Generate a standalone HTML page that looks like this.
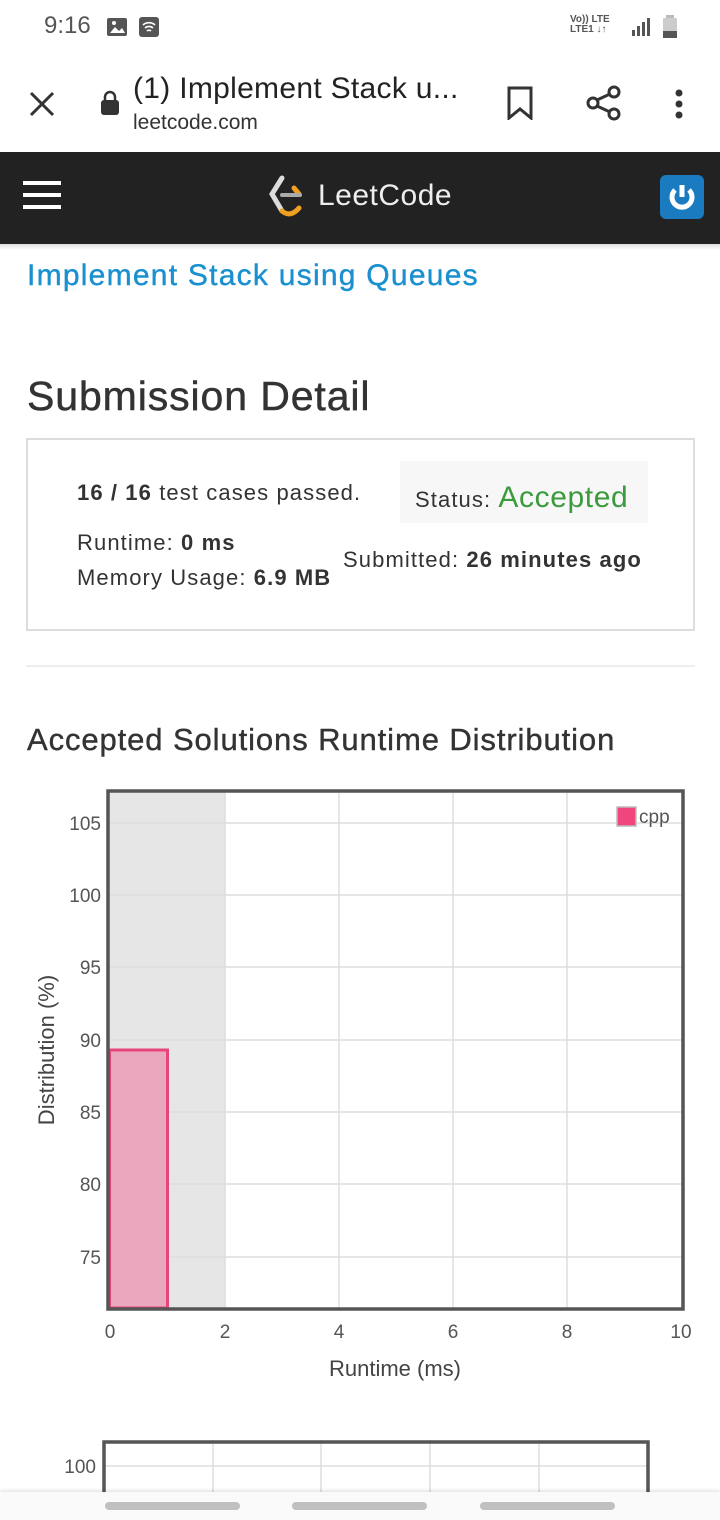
<!DOCTYPE html>
<html><head><meta charset="utf-8"><style>
*{margin:0;padding:0;box-sizing:border-box}
body{width:720px;height:1520px;overflow:hidden;background:#fff;font-family:"Liberation Sans",sans-serif;position:relative;color:#333}
.a{position:absolute}
.t{font-size:22px;letter-spacing:1.1px}
</style></head><body>
<!-- status bar -->
<div class="a" style="left:44px;top:12px;font-size:24px;color:#555">9:16</div>
<svg class="a" style="left:106px;top:16px" width="22" height="22"><rect x="1" y="2" width="20" height="18" fill="#555" rx="2"/><path d="M4 17l5-6 4 4 3-3 3 5z" fill="#fff"/><circle cx="8" cy="7" r="2" fill="#fff"/></svg>
<svg class="a" style="left:138px;top:16px" width="22" height="22"><rect x="1" y="1" width="20" height="20" rx="3" fill="#555"/><path d="M5 9a9 9 0 0 1 12 0M7 12a6 6 0 0 1 8 0M9 15a3 3 0 0 1 4 0" stroke="#fff" stroke-width="1.6" fill="none"/></svg>
<div class="a" style="left:570px;top:15px;font-size:10px;line-height:10px;color:#555;font-weight:bold">Vo)) LTE<br>LTE1 ↓↑</div>
<svg class="a" style="left:630px;top:16px" width="22" height="22"><rect x="2" y="14" width="3" height="6" fill="#555"/><rect x="7" y="10" width="3" height="10" fill="#555"/><rect x="12" y="6" width="3" height="14" fill="#555"/><rect x="17" y="2" width="3" height="18" fill="#555"/></svg>
<svg class="a" style="left:662px;top:14px" width="18" height="26"><rect x="4" y="1" width="8" height="3" fill="#bbb"/><rect x="1" y="4" width="14" height="20" fill="#ccc" rx="1"/><rect x="1" y="17" width="14" height="7" fill="#555"/></svg>
<!-- browser bar -->
<svg class="a" style="left:28px;top:90px" width="28" height="28"><path d="M3 3L25 25M25 3L3 25" stroke="#333" stroke-width="3"/></svg>
<svg class="a" style="left:100px;top:90px" width="20" height="26"><path d="M5 11V7a5 5 0 0 1 10 0v4" stroke="#333" stroke-width="2.5" fill="none"/><rect x="1" y="10" width="18" height="15" rx="3" fill="#333"/></svg>
<div class="a" style="left:133px;top:72px;font-size:30px;color:#222;letter-spacing:0.3px">(1) Implement Stack u...</div>
<div class="a" style="left:133px;top:111px;font-size:21px;color:#333">leetcode.com</div>
<svg class="a" style="left:505px;top:86px" width="30" height="34"><path d="M4 2h22v30l-11-9-11 9z" stroke="#333" stroke-width="3" fill="none"/></svg>
<svg class="a" style="left:585px;top:84px" width="38" height="38"><circle cx="29" cy="8" r="5" stroke="#333" stroke-width="3" fill="none"/><circle cx="8" cy="19" r="5" stroke="#333" stroke-width="3" fill="none"/><circle cx="29" cy="30" r="5" stroke="#333" stroke-width="3" fill="none"/><path d="M12 16l13-6M12 22l13 6" stroke="#333" stroke-width="3"/></svg>
<svg class="a" style="left:672px;top:88px" width="14" height="32"><circle cx="7" cy="5" r="3.5" fill="#333"/><circle cx="7" cy="16" r="3.5" fill="#333"/><circle cx="7" cy="27" r="3.5" fill="#333"/></svg>
<!-- leetcode header -->
<div class="a" style="left:0;top:152px;width:720px;height:92px;background:#222"></div>
<div class="a" style="left:0;top:244px;width:720px;height:6px;background:linear-gradient(#ddd,#fff)"></div>
<div class="a" style="left:23px;top:181px;width:38px;height:4px;background:#fff"></div>
<div class="a" style="left:23px;top:193px;width:38px;height:4px;background:#fff"></div>
<div class="a" style="left:23px;top:205px;width:38px;height:4px;background:#fff"></div>
<svg class="a" style="left:268px;top:174px" width="40" height="44"><path d="M14 4L4 20l10 17" stroke="#ddd" stroke-width="5" fill="none" stroke-linecap="round"/><path d="M26 14l5 6M14 37c6 5 12 3 17-3" stroke="#f0a020" stroke-width="5" fill="none" stroke-linecap="round"/><path d="M14 21h18" stroke="#aaa" stroke-width="4" stroke-linecap="round"/></svg>
<div class="a" style="left:318px;top:179px;font-size:30px;color:#eee;letter-spacing:0.5px">LeetCode</div>
<div class="a" style="left:660px;top:175px;width:44px;height:44px;background:#1a7bc0;border-radius:6px"></div>
<svg class="a" style="left:664px;top:179px" width="36" height="36"><path d="M11 11a10 10 0 1 0 14 0" stroke="#fff" stroke-width="5" fill="none"/><path d="M18 6v12" stroke="#fff" stroke-width="5"/></svg>
<!-- content -->
<div class="a" style="left:27px;top:259px;font-size:30px;color:#1a90d0;letter-spacing:1.25px;-webkit-text-stroke:0.4px #1a90d0">Implement Stack using Queues</div>
<div class="a" style="left:27px;top:373px;font-size:41px;color:#333;letter-spacing:0.9px;-webkit-text-stroke:0.5px #333">Submission Detail</div>
<div class="a" style="left:26px;top:438px;width:669px;height:193px;border:2px solid #ddd"></div>
<div class="a" style="left:400px;top:461px;width:248px;height:62px;background:#f7f7f7"></div>
<div class="a t" style="left:77px;top:480px"><b>16 / 16</b> test cases passed.</div>
<div class="a t" style="left:415px;top:481px">Status: <span style="color:#3b9a3b;font-size:30px;letter-spacing:0.6px">Accepted</span></div>
<div class="a t" style="left:77px;top:530px">Runtime: <b>0 ms</b></div>
<div class="a t" style="left:77px;top:565px">Memory Usage: <b>6.9 MB</b></div>
<div class="a t" style="left:343px;top:547px">Submitted: <b>26 minutes ago</b></div>
<div class="a" style="left:26px;top:665px;width:669px;height:2px;background:#eee"></div>
<div class="a" style="left:27px;top:722px;font-size:31px;letter-spacing:0.9px;-webkit-text-stroke:0.4px #333">Accepted Solutions Runtime Distribution</div>
<!-- chart -->
<svg class="a" style="left:0;top:780px" width="720" height="620" font-family="Liberation Sans" font-size="19" fill="#555">
<rect x="109" y="12" width="116" height="516" fill="#e6e6e6"/>
<g stroke="#ddd" stroke-width="1.5">
<line x1="109" x2="682" y1="43" y2="43"/><line x1="109" x2="682" y1="115" y2="115"/><line x1="109" x2="682" y1="187" y2="187"/><line x1="109" x2="682" y1="260" y2="260"/><line x1="109" x2="682" y1="332" y2="332"/><line x1="109" x2="682" y1="404" y2="404"/><line x1="109" x2="682" y1="477" y2="477"/>
<line x1="225" x2="225" y1="12" y2="528"/><line x1="339" x2="339" y1="12" y2="528"/><line x1="453" x2="453" y1="12" y2="528"/><line x1="567" x2="567" y1="12" y2="528"/>
</g>
<rect x="109.5" y="270" width="58" height="258" fill="#e9a8bd" stroke="#e8457a" stroke-width="3"/>
<rect x="108" y="11" width="575" height="518" fill="none" stroke="#555" stroke-width="3.5"/>
<g text-anchor="end"><text x="101" y="50">105</text><text x="101" y="122">100</text><text x="101" y="194">95</text><text x="101" y="267">90</text><text x="101" y="339">85</text><text x="101" y="411">80</text><text x="101" y="484">75</text></g>
<g text-anchor="middle"><text x="110" y="558">0</text><text x="225" y="558">2</text><text x="339" y="558">4</text><text x="453" y="558">6</text><text x="567" y="558">8</text><text x="681" y="558">10</text></g>
<text x="395" y="596" text-anchor="middle" font-size="22" fill="#444">Runtime (ms)</text>
<text transform="translate(54 270) rotate(-90)" text-anchor="middle" font-size="22" fill="#444">Distribution (%)</text>
<rect x="617" y="27" width="19" height="19" fill="#f0467d" stroke="#bbb" stroke-width="1.5"/>
<text x="639" y="43" font-size="19">cpp</text>
</svg>
<!-- second chart -->
<svg class="a" style="left:0;top:1430px" width="720" height="70" font-family="Liberation Sans" font-size="19" fill="#555">
<g stroke="#ddd" stroke-width="1.5"><line x1="104" x2="648" y1="36" y2="36"/><line x1="213" x2="213" y1="10" y2="70"/><line x1="321" x2="321" y1="10" y2="70"/><line x1="430" x2="430" y1="10" y2="70"/><line x1="539" x2="539" y1="10" y2="70"/></g>
<path d="M104 70V12H648V70" stroke="#555" stroke-width="3.5" fill="none"/>
<text x="96" y="43" text-anchor="end">100</text>
</svg>
<div class="a" style="left:0;top:1492px;width:720px;height:28px;background:#fafafa;box-shadow:0 -2px 3px rgba(0,0,0,0.1)"></div>
<div class="a" style="left:105px;top:1502px;width:135px;height:8px;border-radius:4px;background:#c0c0c0"></div>
<div class="a" style="left:292px;top:1502px;width:135px;height:8px;border-radius:4px;background:#c0c0c0"></div>
<div class="a" style="left:480px;top:1502px;width:135px;height:8px;border-radius:4px;background:#c0c0c0"></div>
</body></html>
